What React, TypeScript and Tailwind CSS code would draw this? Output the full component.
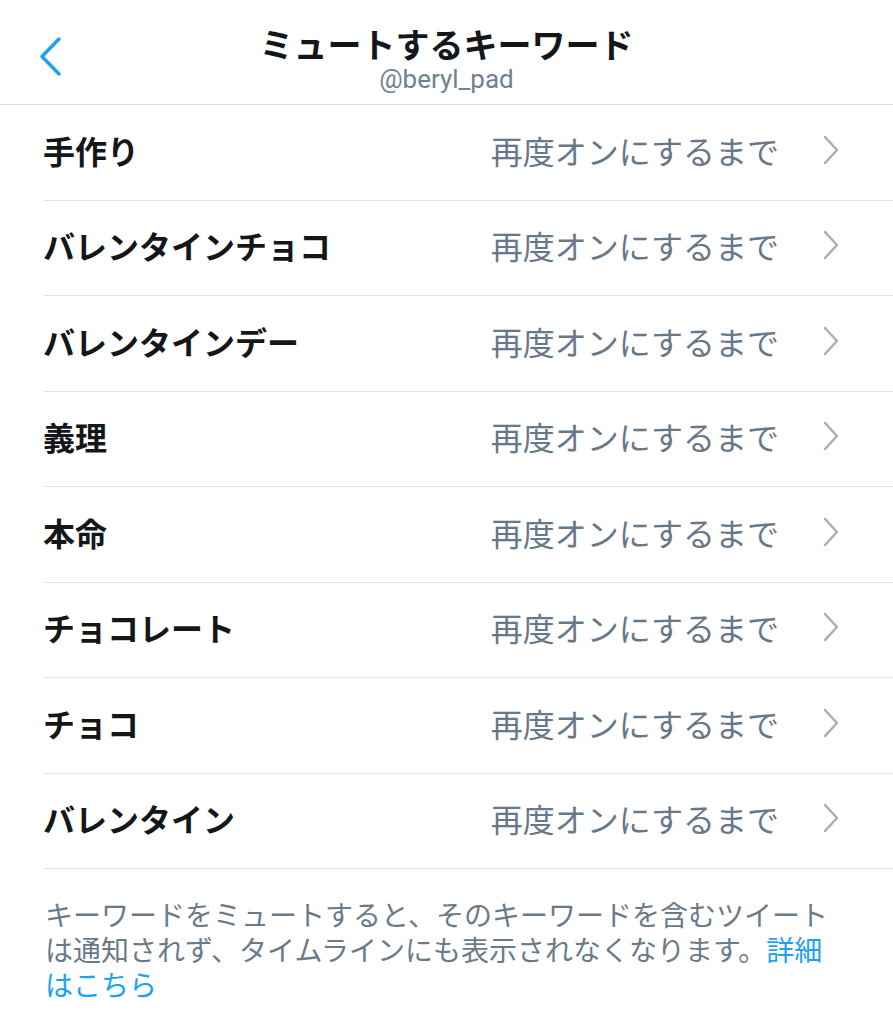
import React from "react";

const keywords = [
  "手作り",
  "バレンタインチョコ",
  "バレンタインデー",
  "義理",
  "本命",
  "チョコレート",
  "チョコ",
  "バレンタイン",
];

const font = "font-['Noto_Sans_CJK_JP','Noto_Sans',sans-serif]";

const Row = ({ label }: { label: string }) => (
  <div className="flex h-[95.5px] items-center border-b border-[#e1e6ea] pr-[54px] pb-[5px]">
    <span className="flex-1 text-[32px] font-bold text-[#14171a]">{label}</span>
    <span className="text-[32px] text-[#66788a]">再度オンにするまで</span>
    <svg width="16" height="30" viewBox="0 0 16 30" className="ml-[44px]">
      <path
        d="M2 2 L14 15 L2 28"
        fill="none"
        stroke="#a5b0ba"
        strokeWidth="2.5"
        strokeLinecap="round"
        strokeLinejoin="round"
      />
    </svg>
  </div>
);

export default function App() {
  return (
    <div className={`w-[893px] h-[1024px] bg-white overflow-hidden ${font}`}>
      {/* Header */}
      <header className="relative flex h-[105px] flex-col items-center border-b border-[#d6dbe0] pt-[22px]">
        <svg
          width="30"
          height="44"
          viewBox="0 0 30 44"
          className="absolute left-[34px] top-[35px]"
        >
          <path
            d="M25 4 L8 21.5 L25 39"
            fill="none"
            stroke="#1da1f2"
            strokeWidth="3.5"
            strokeLinecap="round"
            strokeLinejoin="round"
          />
        </svg>
        <h1 className="text-[34px] font-bold leading-[44px] text-[#14171a]">
          ミュートするキーワード
        </h1>
        <p className="font-['Roboto','Noto_Sans',sans-serif] text-[26px] leading-[26px] text-[#72818f]">
          @beryl_pad
        </p>
      </header>

      {/* Keyword list */}
      <div className="pl-[43px]">
        {keywords.map((k) => (
          <Row key={k} label={k} />
        ))}
      </div>

      {/* Footer note */}
      <p className="px-[45px] pt-[28px] text-[28px] leading-[35px] text-[#6b7a88]">
        キーワードをミュートすると、そのキーワードを含むツイートは通知されず、タイムラインにも表示されなくなります。
        <span className="text-[#1da1f2]">詳細はこちら</span>
      </p>
    </div>
  );
}
